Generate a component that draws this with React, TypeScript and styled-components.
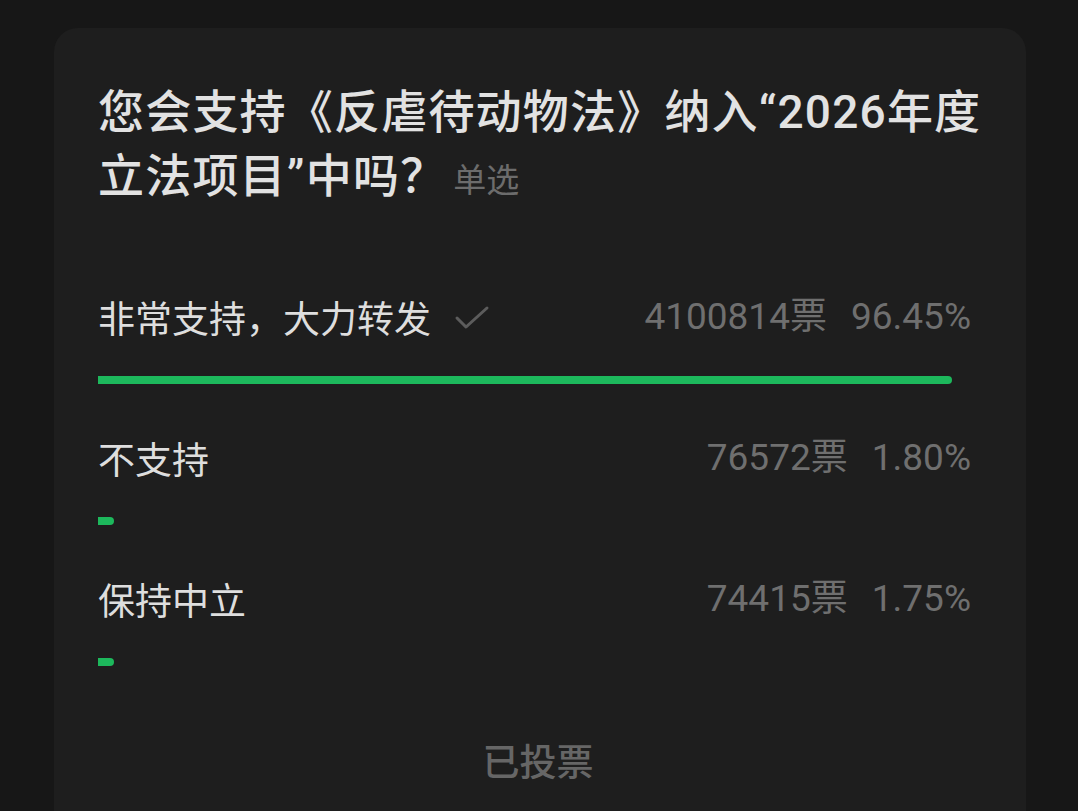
import React from "react";
import styled, { createGlobalStyle } from "styled-components";

const GlobalStyle = createGlobalStyle`
  html, body {
    margin: 0;
    padding: 0;
    background: #171717;
  }
  body {
    font-family: Roboto, "Noto Sans CJK SC", sans-serif;
    overflow: hidden;
  }
`;

const Page = styled.div`
  width: 1078px;
  height: 811px;
  padding: 28px 52px 0 54px;
  box-sizing: border-box;
`;

const Card = styled.div`
  background: #1e1e1e;
  border-radius: 24px 24px 0 0;
  height: 783px;
  padding: 52px 36px 0 44px;
  box-sizing: border-box;
`;

const Title = styled.h1`
  margin: 0;
  font-family: Roboto, "Noto Sans CJK SC", sans-serif;
  font-size: 46px;
  line-height: 64px;
  font-weight: 500;
  letter-spacing: 1.2px;
  color: #e2e2e2;
`;

const Mode = styled.span`
  display: inline-block;
  font-family: "Noto Sans CJK SC", sans-serif;
  font-size: 33px;
  line-height: 40px;
  font-weight: 400;
  letter-spacing: 0;
  color: #6c6c6c;
  margin-left: 6px;
`;

const Options = styled.div`
  display: flex;
  flex-direction: column;
  gap: 49px;
  margin-top: 84px;
  padding-right: 19px;
`;

const Option = styled.div`
  display: flex;
  flex-direction: column;
`;

const Head = styled.div`
  display: flex;
  align-items: center;
  height: 50px;
`;

const Label = styled.span`
  font-family: "Noto Sans CJK SC", sans-serif;
  font-size: 37px;
  color: #dedede;
`;

const Check = styled.svg`
  width: 38px;
  height: 38px;
  margin-left: 22px;
`;

const Stats = styled.span`
  margin-left: auto;
  display: flex;
  align-items: baseline;
  gap: 24px;
  font-family: Roboto, "Noto Sans CJK SC", sans-serif;
  font-size: 37px;
  line-height: 50px;
  color: #6f6f6f;
`;

const Track = styled.div`
  margin-top: 34px;
  width: 854px;
  height: 8px;
`;

const Fill = styled.div`
  height: 100%;
  min-width: 16px;
  background: #1db85c;
  border-radius: 0 4px 4px 0;
`;

const Voted = styled.div`
  margin-top: 69px;
  text-align: center;
  font-family: "Noto Sans CJK SC", sans-serif;
  font-size: 37px;
  font-weight: 500;
  line-height: 50px;
  color: #666;
  padding-right: 12px;
`;

const options = [
  { label: "非常支持，大力转发", votes: "4100814票", pct: "96.45%", width: 100, chosen: true },
  { label: "不支持", votes: "76572票", pct: "1.80%", width: 0, chosen: false },
  { label: "保持中立", votes: "74415票", pct: "1.75%", width: 0, chosen: false },
];

export default function App() {
  return (
    <Page>
      <GlobalStyle />
      <Card>
        <Title>
          您会支持《反虐待动物法》纳入“2026年度立法项目”中吗？
          <Mode>单选</Mode>
        </Title>
        <Options>
          {options.map((o) => (
            <Option key={o.label}>
              <Head>
                <Label>{o.label}</Label>
                {o.chosen && (
                  <Check viewBox="0 0 38 38">
                    <polyline
                      points="4,20 13,29 34,10"
                      fill="none"
                      stroke="#5c5c5c"
                      strokeWidth="3"
                      strokeLinecap="round"
                      strokeLinejoin="round"
                    />
                  </Check>
                )}
                <Stats>
                  <span>{o.votes}</span>
                  <span>{o.pct}</span>
                </Stats>
              </Head>
              <Track>
                <Fill style={{ width: `${o.width}%` }} />
              </Track>
            </Option>
          ))}
        </Options>
        <Voted>已投票</Voted>
      </Card>
    </Page>
  );
}
